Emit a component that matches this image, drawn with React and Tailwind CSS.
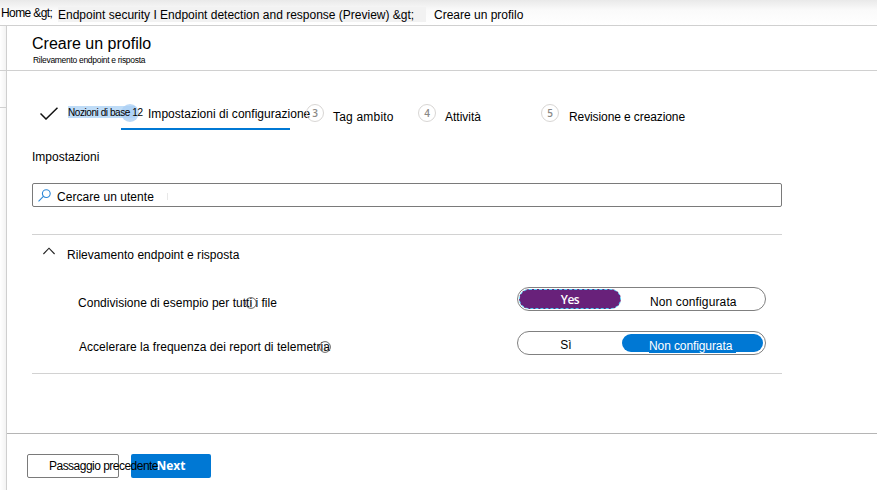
import React from 'react';

function StepNumber({ children }) {
  return (
    <span className="flex size-[18px] shrink-0 items-center justify-center rounded-full border border-[#d8d6d4] font-['Open_Sans',sans-serif] text-[10px] font-semibold leading-none text-[#8a8886]">
      {children}
    </span>
  );
}

function Breadcrumb() {
  return (
    <nav className="flex h-[26px] items-start border-b border-[#d0d0d0] bg-linear-to-b from-[#e9e9e9] via-[#fafafa] via-40% to-white">
      <span className="mt-[5px] ml-px w-[57px] tracking-[-0.6px]">Home &amp;gt;</span>
      <span className="mt-[7px] h-[15px] w-[368px] bg-[#f2f2f2]">
        Endpoint security I Endpoint detection and response (Preview) &amp;gt;
      </span>
      <span className="mt-[7px] ml-2">Creare un profilo</span>
    </nav>
  );
}

function Steps() {
  return (
    <div className="flex h-[60px] items-start pl-[33px]">
      <svg className="mt-[36px] shrink-0" width="18" height="13" viewBox="0 0 18 13" fill="none" stroke="#111" strokeWidth="1.5">
        <path d="M.5 6.5 6 12 17.5.7" />
      </svg>
      <div className="relative mt-[34px] ml-[10px] h-[13px] w-[80px]">
        <span className="absolute top-[1px] left-0 h-[12px] w-[67px] bg-[#bfdcf7]" />
        <span className="absolute top-[-1px] left-[53px] size-[18px] rounded-full bg-[#abd0f4]/80" />
        <span className="relative top-[-1px] text-[10px] leading-[13px] tracking-[-0.43px]">Nozioni di base 12</span>
      </div>
      <span className="mt-[35px] w-[158px] tracking-[0.03px]">Impostazioni di configurazione</span>
      <div className="mt-[33px] flex w-[112px]">
        <StepNumber>3</StepNumber>
        <span className="mt-[5px] ml-[9px] tracking-[0.2px]">Tag ambito</span>
      </div>
      <div className="mt-[33px] flex w-[123px]">
        <StepNumber>4</StepNumber>
        <span className="mt-[5px] ml-[9px]">Attività</span>
      </div>
      <div className="mt-[33px] flex">
        <StepNumber>5</StepNumber>
        <span className="mt-[5px] ml-[10px] tracking-[-0.1px]">Revisione e creazione</span>
      </div>
    </div>
  );
}

function InfoIcon() {
  return (
    <svg width="12" height="12" viewBox="0 0 12 12" fill="none" stroke="#555" strokeWidth=".9">
      <circle cx="6" cy="6" r="5.4" />
      <path d="M6 5v4M6 3v1" />
    </svg>
  );
}

export default function App() {
  return (
    <div className="flex h-[490px] w-[877px] flex-col overflow-hidden bg-white font-['Liberation_Sans',Arial,sans-serif] text-[12px] leading-4 whitespace-nowrap text-black">
      <Breadcrumb />
      <div className="flex flex-1">
        <aside className="w-[7px] shrink-0 border-r border-[#cfcfcf] bg-linear-to-r from-white to-[#f3f3f3]">
          <div className="h-[45px] border-b border-[#d0d0d0]" />
          <div className="h-[37px] border-b border-[#d0d0d0]" />
        </aside>
        <main className="flex flex-1 flex-col">
          <header className="h-[45px] border-b border-[#d0d0d0] pt-2 pl-[25px]">
            <h1 className="text-[16px] leading-5">Creare un profilo</h1>
            <p className="ml-px text-[8.5px] leading-3 tracking-[-0.3px]">Rilevamento endpoint e risposta</p>
          </header>
          <Steps />
          <div className="-mt-[3px] ml-[114px] h-[2px] w-[169px] bg-[#0078d4]" />
          <section className="ml-[25px] flex w-[750px] flex-col">
            <h2 className="mt-[19px]">Impostazioni</h2>
            <div className="mt-[18px] flex h-[24px] items-start rounded-[2px] border border-[#7a7a7a]">
              <svg className="mt-[5px] ml-[5px]" width="13" height="13" viewBox="0 0 13 13" fill="none" stroke="#2b88d8" strokeWidth="1.1">
                <circle cx="8.3" cy="4.6" r="3.9" />
                <path d="M5.4 7.4.5 12.4" />
              </svg>
              <span className="mt-[5px] ml-[6px] w-[110px] tracking-[0.05px]">Cercare un utente</span>
              <span className="mt-[9px] h-[7px] w-px bg-[#e8e8e8]" />
            </div>
            <div className="mt-[27px] h-[140px] border-y border-[#d2d2d2]">
              <div className="flex h-[52px] items-start">
                <svg className="mt-[12px] ml-[11px]" width="12" height="8" viewBox="0 0 12 8" fill="none" stroke="#222" strokeWidth="1.1">
                  <path d="M.4 7 6 1.2 11.6 7" />
                </svg>
                <span className="mt-[12px] ml-[12px] tracking-[0.03px]">Rilevamento endpoint e risposta</span>
              </div>
              <div className="flex h-[44px] items-start">
                <div className="relative mt-[8px] ml-[46px] w-[439px] tracking-[0.02px]">
                  Condivisione di esempio per tutti i file
                  <span className="absolute top-[2px] left-[167px]"><InfoIcon /></span>
                </div>
                <div className="flex h-[24px] w-[249px] rounded-full border border-[#808080] p-px">
                  <span className="h-[20px] w-[102px] rounded-full border border-dashed border-[#50c8f0] bg-[#68217a] text-center font-['Open_Sans',sans-serif] font-semibold leading-[19px] tracking-[-0.5px] text-white">
                    Yes
                  </span>
                  <span className="mt-[5px] ml-[29px] tracking-[0.13px]">Non configurata</span>
                </div>
              </div>
              <div className="flex items-start">
                <div className="relative mt-[8px] ml-[47px] w-[438px] tracking-[0.03px]">
                  Accelerare la frequenza dei report di telemetria
                  <span className="absolute top-[2px] left-[240px]"><InfoIcon /></span>
                </div>
                <div className="flex h-[24px] w-[249px] rounded-full border border-[#808080] p-px">
                  <span className="mt-[4px] w-[94px] text-center">Sì</span>
                  <span className="mt-px ml-[9px] h-[18px] w-[141px] rounded-full bg-[#0078d4] pt-[4px] pl-[27px] text-white">
                    <span className="block h-[15px] w-[87px] bg-[#0078d4] tracking-[-0.1px]">Non configurata</span>
                  </span>
                </div>
              </div>
            </div>
          </section>
          <footer className="mt-auto flex h-[57px] border-t border-[#b5b5b5] pt-5 pl-5">
            <button className="z-10 flex h-[24px] w-[92px] items-start rounded-[2px] border border-[#7a7a7a] pt-[3px] pl-[21px] text-left tracking-[-0.52px]">
              Passaggio precedente
            </button>
            <button className="ml-3 h-[24px] w-[80px] rounded-[2px] bg-[#0078d4] text-center font-['Open_Sans',sans-serif] font-bold text-white">
              Next
            </button>
          </footer>
        </main>
      </div>
    </div>
  );
}
